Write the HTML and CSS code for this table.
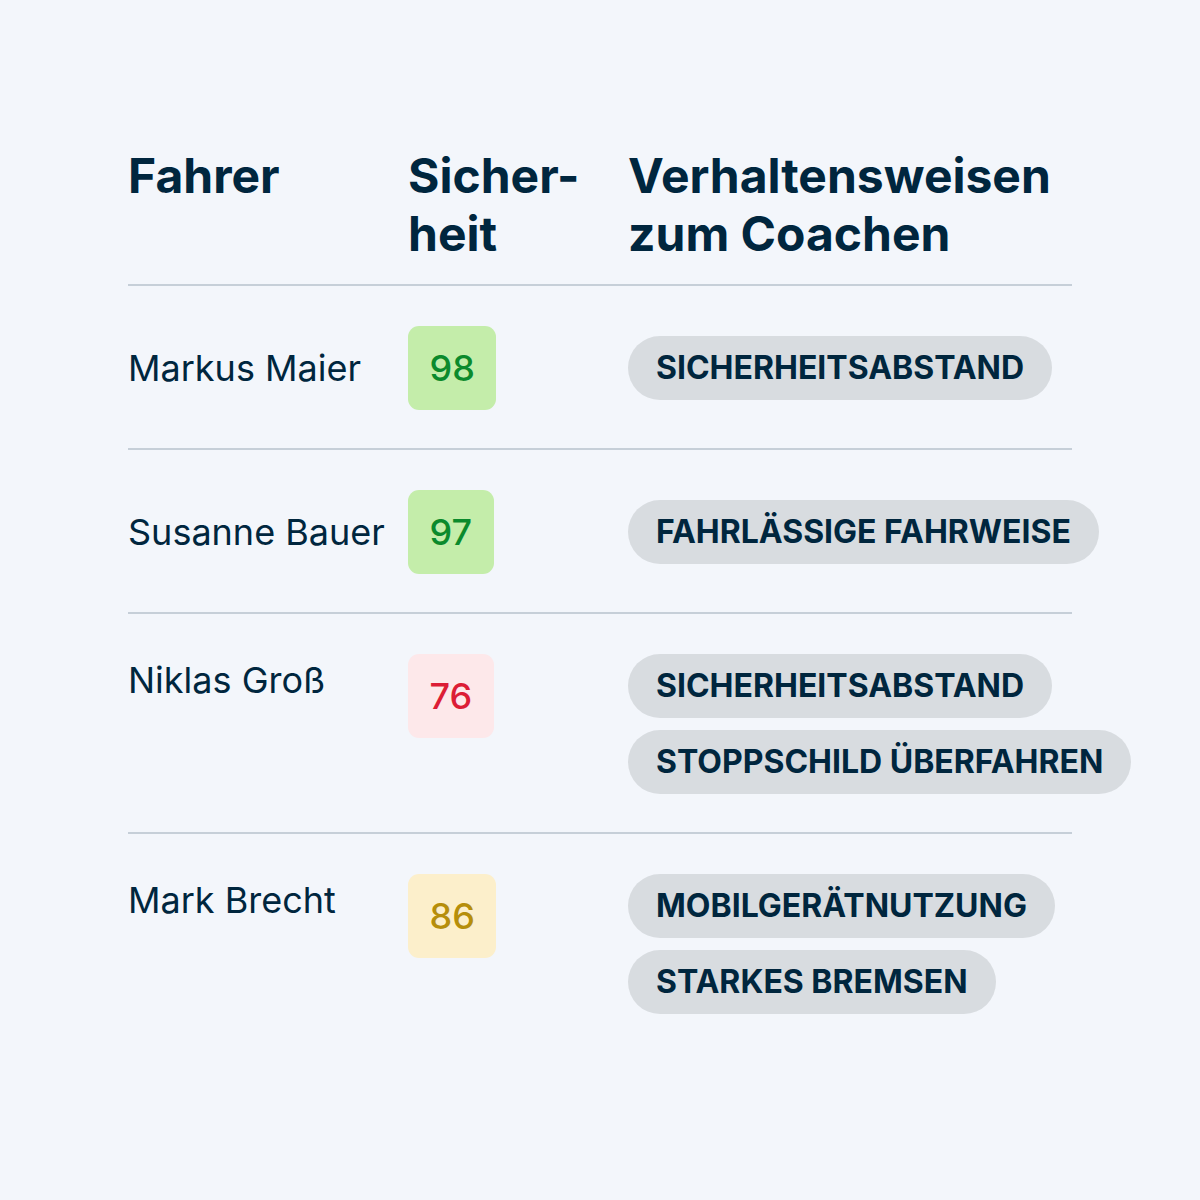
FILE: index.html
```html
<!DOCTYPE html>
<html lang="de">
<head>
<meta charset="utf-8">
<title>Fahrer Sicherheit</title>
<link rel="stylesheet" href="styles.css">
</head>
<body>
<div class="page">
  <div class="table">
    <div class="row head">
      <div class="th">Fahrer</div>
      <div class="th">Sicher-<br>heit</div>
      <div class="th">Verhaltensweisen zum Coachen</div>
    </div>
    <div class="row">
      <div class="name">Markus Maier</div>
      <div><span class="score score--good">98</span></div>
      <div class="chips"><span class="chip">SICHERHEITSABSTAND</span></div>
    </div>
    <div class="row">
      <div class="name">Susanne Bauer</div>
      <div><span class="score score--good">97</span></div>
      <div class="chips"><span class="chip">FAHRLÄSSIGE FAHRWEISE</span></div>
    </div>
    <div class="row row--top">
      <div class="name">Niklas Groß</div>
      <div><span class="score score--bad">76</span></div>
      <div class="chips"><span class="chip">SICHERHEITSABSTAND</span><span class="chip">STOPPSCHILD ÜBERFAHREN</span></div>
    </div>
    <div class="row row--top row--last">
      <div class="name">Mark Brecht</div>
      <div><span class="score score--mid">86</span></div>
      <div class="chips"><span class="chip">MOBILGERÄTNUTZUNG</span><span class="chip">STARKES BREMSEN</span></div>
    </div>
  </div>
</div>
</body>
</html>
```

FILE: styles.css
```css
html, body {
  margin: 0;
  padding: 0;
  background: #f3f6fb;
}
body {
  font-family: Inter, "Noto Sans", sans-serif;
  color: #00263e;
}
.page {
  padding: 147px 0 0 128px;
}
.table {
  width: 944px;
}
.row {
  display: grid;
  grid-template-columns: 280px 220px 444px;
  align-items: center;
  padding: 40px 0 38px;
  border-bottom: 2px solid #c6cfd8;
}
.row--top {
  align-items: start;
}
.row--last {
  border-bottom: none;
}
.head {
  padding: 0 0 22px;
  align-items: start;
}
.th {
  font-size: 48px;
  font-weight: 700;
  line-height: 57.6px;
}
.name {
  font-size: 36px;
  font-weight: 400;
  line-height: 52px;
  white-space: nowrap;
}
.score {
  display: inline-block;
  font-size: 36px;
  font-weight: 500;
  line-height: 44px;
  padding: 20px 21.5px;
  border-radius: 11px;
}
.score--good {
  background: #c4edaa;
  color: #0b8a2c;
}
.score--bad {
  background: #fde8ea;
  color: #dc1d36;
}
.score--mid {
  background: #fcefcb;
  color: #b68e0b;
}
.chips {
  display: flex;
  flex-direction: column;
  align-items: flex-start;
  gap: 12px;
}
.chip {
  display: inline-block;
  white-space: nowrap;
  background: #d8dce0;
  font-size: 32px;
  font-weight: 700;
  line-height: 36px;
  padding: 14px 28px;
  border-radius: 32px;
}
```
